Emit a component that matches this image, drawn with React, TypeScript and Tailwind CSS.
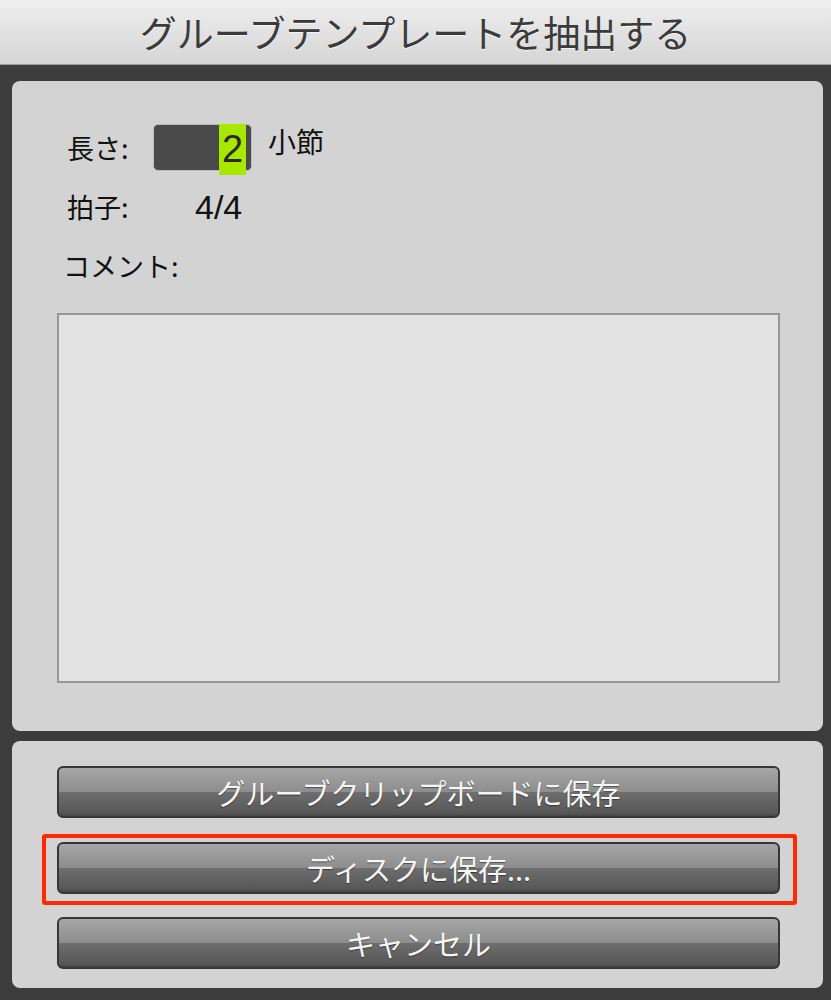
import React from 'react';

const jp = "font-['Noto_Sans_CJK_JP','Noto_Sans',sans-serif]";

function DialogButton({ label }: { label: string }) {
  return (
    <button
      className={`${jp} w-full h-[52px] rounded-[6px] border-2 border-[#363636] bg-[linear-gradient(to_bottom,#a6a6a6_0%,#8d8d8d_50%,#6e6e6e_50%,#575757_94%,#454545_100%)] text-[29px] leading-none text-[#f6f6f6] [text-shadow:0_1px_1px_rgba(0,0,0,0.45)] flex items-center justify-center`}
    >
      {label}
    </button>
  );
}

export default function App() {
  return (
    <div className="w-[831px] h-[1000px] bg-[#3c3c3c] flex flex-col">
      {/* window title */}
      <div className="h-[65px] shrink-0 bg-[linear-gradient(to_bottom,#efefef,#d5d5d5)] border-b border-[#9a9a9a] flex items-center justify-center">
        <span className={`${jp} text-[37px] leading-none text-[#3b3b3b] [text-shadow:0_1px_0_rgba(255,255,255,0.7)]`}>
          グルーブテンプレートを抽出する
        </span>
      </div>

      {/* settings panel */}
      <div className="ml-[12px] mr-[8px] mt-[16px] h-[650px] rounded-[8px] bg-[#d3d3d3] flex flex-col pt-[43px]">
        <div className="flex items-start h-[47px]">
          <span className={`${jp} ml-[55px] w-[86px] text-[27px] leading-[47px] text-[#111]`}>長さ:</span>
          <div className="w-[99px] h-[47px] rounded-[5px] bg-[#4a4a4a] border border-[#bdbdbd] flex items-start justify-end pr-[5px]">
            <span className="-mt-px w-[27px] h-[51px] bg-[#a8e800] font-['Liberation_Sans',sans-serif] text-[38px] leading-[51px] text-[#2a2a2a] text-center">
              2
            </span>
          </div>
          <span className={`${jp} ml-[16px] -mt-[6px] text-[28px] leading-[47px] text-[#111]`}>小節</span>
        </div>

        <div className="flex items-center h-[36px] mt-[18px]">
          <span className={`${jp} ml-[55px] w-[128px] text-[27px] leading-[36px] text-[#111]`}>拍子:</span>
          <span className="font-['Liberation_Sans',sans-serif] text-[34px] leading-[36px] text-[#111]">4/4</span>
        </div>

        <div className="flex items-center h-[36px] mt-[23px]">
          <span className={`${jp} ml-[51px] text-[27px] leading-[36px] text-[#111]`}>コメント:</span>
        </div>

        <div className="ml-[45px] mt-[29px] w-[723px] h-[370px] bg-[#e3e3e3] border-2 border-[#979797]" />
      </div>

      {/* action buttons */}
      <div className="ml-[12px] mr-[8px] mt-[10px] h-[247px] rounded-[8px] bg-[#d3d3d3] pt-[25px] pl-[45px] flex flex-col">
        <div className="w-[723px] flex flex-col">
          <DialogButton label="グルーブクリップボードに保存" />
          <div className="relative mt-[24px]">
            <DialogButton label="ディスクに保存..." />
            <div className="absolute -left-[15px] -right-[17px] -top-[8px] -bottom-[11px] border-4 border-[#ff2a00] rounded-[3px] pointer-events-none" />
          </div>
          <div className="mt-[23px]">
            <DialogButton label="キャンセル" />
          </div>
        </div>
      </div>
    </div>
  );
}
